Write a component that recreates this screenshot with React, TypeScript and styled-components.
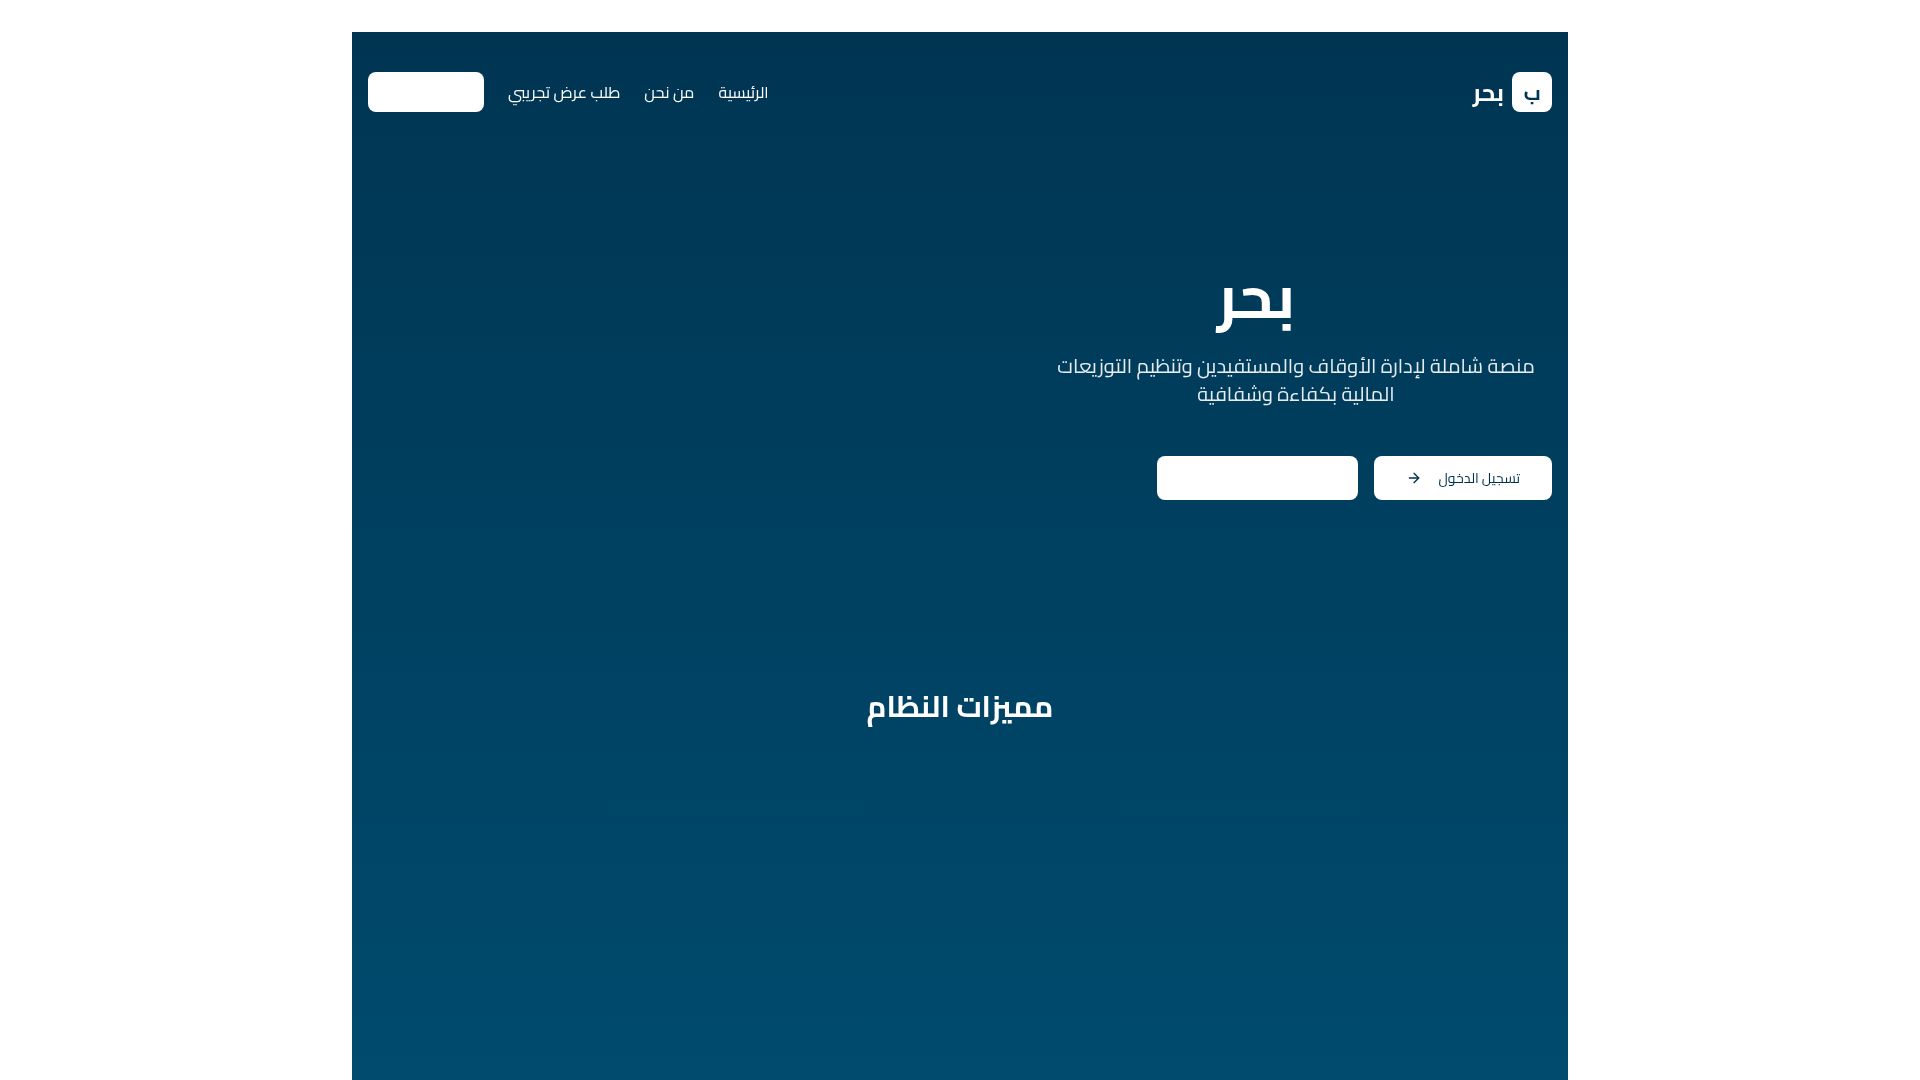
import React from "react";
import styled, { createGlobalStyle } from "styled-components";
import { ArrowRight } from "lucide-react";

const Global = createGlobalStyle`
  html, body { margin: 0; padding: 0; background: #fff; }
  body {
    font-family: "Cairo", "Noto Sans Arabic", "DejaVu Sans", sans-serif;
    overflow: hidden;
  }
`;

const Page = styled.div`
  width: 1216px;
  height: 1048px;
  margin: 32px auto 0;
  padding: 40px 16px 0;
  box-sizing: border-box;
  direction: rtl;
  color: #fff;
  background: linear-gradient(180deg, #003552 0%, #004b6e 100%);
  will-change: transform;
`;

const Header = styled.header`
  display: flex;
  align-items: center;
  justify-content: space-between;
  height: 40px;
`;

const Brand = styled.div`
  display: flex;
  align-items: center;
  gap: 8px;
`;

const LogoMark = styled.div`
  width: 40px;
  height: 40px;
  border-radius: 8px;
  background: #fff;
  color: #003554;
  display: flex;
  align-items: center;
  justify-content: center;
  font-size: 20px;
  font-weight: 700;
`;

const BrandName = styled.span`
  font-size: 24px;
  font-weight: 700;
`;

const Nav = styled.nav`
  display: flex;
  align-items: center;
  gap: 24px;
`;

const NavLink = styled.a`
  font-size: 16px;
  font-weight: 400;
  color: #fff;
`;

const BlankButton = styled.div<{ $w: number; $h: number }>`
  width: ${(p) => p.$w}px;
  height: ${(p) => p.$h}px;
  border-radius: 8px;
  background: #fff;
`;

const Hero = styled.section`
  display: grid;
  grid-template-columns: 1fr 1fr;
  margin-top: 148px;
`;

const HeroCol = styled.div`
  display: flex;
  flex-direction: column;
`;

const Title = styled.h1`
  margin: 0 0 20px;
  font-size: 60px;
  line-height: 72px;
  font-weight: 700;
  text-align: center;
`;

const Subtitle = styled.p`
  margin: 0 0 48px;
  max-width: 512px;
  font-size: 20px;
  line-height: 28px;
  font-weight: 400;
  text-align: center;
  color: rgba(255, 255, 255, 0.9);
`;

const Actions = styled.div`
  display: flex;
  gap: 16px;
`;

const LoginButton = styled.a`
  width: 178px;
  height: 44px;
  box-sizing: border-box;
  padding: 0 32px;
  border-radius: 8px;
  background: #fff;
  color: #00304a;
  display: flex;
  align-items: center;
  justify-content: space-between;
  font-size: 14px;
`;

const Features = styled.section`
  margin-top: 188px;
`;

const SectionTitle = styled.h2`
  margin: 0;
  font-size: 30px;
  line-height: 36px;
  font-weight: 700;
  text-align: center;
`;

export default function App() {
  return (
    <>
      <Global />
      <Page>
        <Header>
          <Brand>
            <LogoMark>ب</LogoMark>
            <BrandName>بحر</BrandName>
          </Brand>
          <Nav>
            <NavLink>الرئيسية</NavLink>
            <NavLink>من نحن</NavLink>
            <NavLink>طلب عرض تجريبي</NavLink>
            <BlankButton $w={116} $h={40} />
          </Nav>
        </Header>
        <Hero>
          <HeroCol>
            <Title>بحر</Title>
            <Subtitle>منصة شاملة لإدارة الأوقاف والمستفيدين وتنظيم التوزيعات المالية بكفاءة وشفافية</Subtitle>
            <Actions>
              <LoginButton>
                <span>تسجيل الدخول</span>
                <ArrowRight size={16} />
              </LoginButton>
              <BlankButton $w={201} $h={44} />
            </Actions>
          </HeroCol>
        </Hero>
        <Features>
          <SectionTitle>مميزات النظام</SectionTitle>
        </Features>
      </Page>
    </>
  );
}
